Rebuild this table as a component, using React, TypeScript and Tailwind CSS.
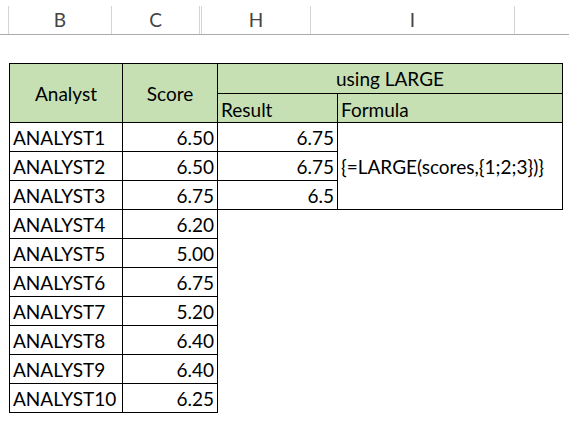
import React from "react";

const scores = [
  ["ANALYST1", "6.50"],
  ["ANALYST2", "6.50"],
  ["ANALYST3", "6.75"],
  ["ANALYST4", "6.20"],
  ["ANALYST5", "5.00"],
  ["ANALYST6", "6.75"],
  ["ANALYST7", "5.20"],
  ["ANALYST8", "6.40"],
  ["ANALYST9", "6.40"],
  ["ANALYST10", "6.25"],
];

const results = ["6.75", "6.75", "6.5"];

export default function App() {
  const cell = "border border-black h-[29px] px-[3px] leading-none whitespace-nowrap";
  return (
    <div
      className="w-[569px] h-[429px] bg-white text-black text-[19px] overflow-hidden"
      style={{ fontFamily: "Lato, 'Open Sans', sans-serif" }}
    >
      {/* column letters */}
      <div className="h-[35px] border-b border-[#ababab] flex text-[#444] text-[19px]">
        <div className="w-[8px]" />
        <div className="w-[103px] border-l border-[#d4d4d4] mt-[6px] flex items-center justify-center">B</div>
        <div className="w-[88px] border-l border-[#d4d4d4] mt-[6px] flex items-center justify-center">C</div>
        <div className="w-[3px] border-l border-r border-[#d4d4d4] mt-[6px]" />
        <div className="w-[108px] mt-[6px] flex items-center justify-center">H</div>
        <div className="w-[204px] border-l border-[#d4d4d4] mt-[6px] flex items-center justify-center">I</div>
        <div className="flex-1 border-l border-[#d4d4d4] mt-[6px]" />
      </div>

      <div className="pl-[9px] pt-[28px]">
        <table className="border-collapse table-fixed w-[553px]">
          <colgroup>
            <col className="w-[113px]" />
            <col className="w-[95px]" />
            <col className="w-[120px]" />
            <col className="w-[225px]" />
          </colgroup>
          <tbody>
            <tr>
              <td rowSpan={2} className={`${cell} bg-[#c6e0b4] text-center`}>Analyst</td>
              <td rowSpan={2} className={`${cell} bg-[#c6e0b4] text-center`}>Score</td>
              <td colSpan={2} className={`${cell} h-[30px] bg-[#c6e0b4] text-center`}>using LARGE</td>
            </tr>
            <tr>
              <td className={`${cell} bg-[#c6e0b4] text-left align-bottom pb-[3px]`}>Result</td>
              <td className={`${cell} bg-[#c6e0b4] text-left align-bottom pb-[3px]`}>Formula</td>
            </tr>
            {scores.map(([name, score], i) => (
              <tr key={name}>
                <td className={cell}>{name}</td>
                <td className={`${cell} text-right`}>{score}</td>
                {i < 3 && <td className={`${cell} text-right`}>{results[i]}</td>}
                {i === 0 && (
                  <td rowSpan={3} className={`${cell} text-left px-[2px]`}>
                    {"{=LARGE(scores,{1;2;3})}"}
                  </td>
                )}
              </tr>
            ))}
          </tbody>
        </table>
      </div>
    </div>
  );
}
